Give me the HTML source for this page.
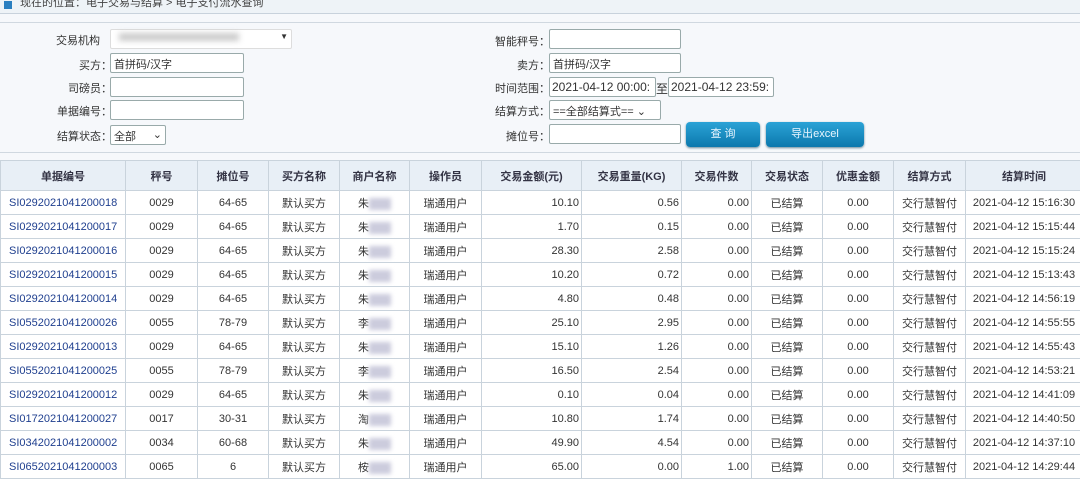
<!DOCTYPE html><html><head><meta charset="utf-8"><style>
body{margin:0;width:1080px;height:479px;overflow:hidden;background:#f6f8fb;font-family:"Liberation Sans","Noto Sans CJK SC",sans-serif;font-size:11px;color:#333;position:relative}
.a{position:absolute}
.lbl{position:absolute;text-align:right;font-size:11px;color:#333}
.in{position:absolute;height:19px;border:1px solid #9aa;background:#fff;box-sizing:border-box;font-size:11px;padding:2px 3px;color:#333;border-radius:2px}
.btn{position:absolute;height:25px;border-radius:4px;background:linear-gradient(#2ba3d6,#0b78ad);color:#eaf6ff;font-size:11px;text-align:center;line-height:25px;box-shadow:0 1px 2px #689}
table{position:absolute;left:0;top:160px;border-collapse:collapse;table-layout:fixed;width:1082px}
td,th{border:1px solid #c9d3dc;height:24px;padding:0 2px;font-size:11px;white-space:nowrap;overflow:hidden;text-align:center;box-sizing:border-box}
th{background:#e8eff6;height:30px;font-weight:bold;color:#334}
td{background:#fff}
td.r{text-align:right}
td.b{color:#1f3f8f;text-align:left;padding-left:8px}
.bl{display:inline-block;width:22px;height:12px;background:#ccd;filter:blur(2px);vertical-align:middle}
</style></head><body>
<div class="a" style="left:0;top:0;width:1080px;height:13px;background:#eef3f7;border-bottom:1px solid #c8d2dc;overflow:hidden">
<div class="a" style="left:4px;top:1px;width:8px;height:8px;background:#2a7fc0"></div>
<div class="a" style="left:20px;top:-6px;font-size:11px;color:#444">现在的位置：电子交易与结算 &gt; 电子支付流水查询</div>
</div>
<div class="a" style="left:0;top:22px;width:1080px;border-top:1px solid #d0d8e0"></div>
<div class="lbl" style="left:20px;width:80px;top:32px">交易机构</div>
<div class="in" style="left:110px;top:29px;width:182px;height:20px;border-color:#ddd"><span style="display:inline-block;width:120px;height:8px;background:#ccc;filter:blur(3px);margin-left:5px"></span><span style="float:right;font-size:8px">▼</span></div>
<div class="lbl" style="left:20px;width:92px;top:57px">买方：</div>
<div class="in" style="left:110px;top:53px;width:134px;height:20px">首拼码/汉字</div>
<div class="lbl" style="left:20px;width:92px;top:80px">司磅员：</div>
<div class="in" style="left:110px;top:77px;width:134px;height:20px"></div>
<div class="lbl" style="left:20px;width:92px;top:103px">单据编号：</div>
<div class="in" style="left:110px;top:100px;width:134px;height:20px"></div>
<div class="lbl" style="left:20px;width:92px;top:128px">结算状态：</div>
<div class="in" style="left:110px;top:125px;width:56px;height:20px">全部 <span style="float:right">⌄</span></div>
<div class="lbl" style="left:470px;width:80px;top:33px">智能秤号：</div>
<div class="in" style="left:549px;top:29px;width:132px;height:20px"></div>
<div class="lbl" style="left:470px;width:80px;top:57px">卖方：</div>
<div class="in" style="left:549px;top:53px;width:132px;height:20px">首拼码/汉字</div>
<div class="lbl" style="left:470px;width:80px;top:80px">时间范围：</div>
<div class="in" style="left:549px;top:77px;width:107px;height:20px;font-size:12px;padding:2px">2021-04-12 00:00:</div>
<div class="a" style="left:656px;top:80px;font-size:12px">至</div>
<div class="in" style="left:668px;top:77px;width:106px;height:20px;font-size:12px;padding:2px">2021-04-12 23:59:</div>
<div class="lbl" style="left:470px;width:80px;top:103px">结算方式：</div>
<div class="in" style="left:549px;top:100px;width:112px;height:20px;font-size:11px">==全部结算式== ⌄</div>
<div class="lbl" style="left:470px;width:80px;top:128px">摊位号：</div>
<div class="in" style="left:549px;top:124px;width:132px;height:20px"></div>
<div class="btn" style="left:686px;top:122px;width:74px">查 询</div>
<div class="btn" style="left:766px;top:122px;width:98px">导出excel</div>
<div class="a" style="left:0;top:152px;width:1080px;border-top:1px solid #d0d8e0"></div>
<table>
<colgroup><col style="width:125px"><col style="width:72px"><col style="width:71px"><col style="width:71px"><col style="width:70px"><col style="width:72px"><col style="width:100px"><col style="width:100px"><col style="width:70px"><col style="width:71px"><col style="width:71px"><col style="width:72px"><col style="width:117px"></colgroup>
<tr><th>单据编号</th><th>秤号</th><th>摊位号</th><th>买方名称</th><th>商户名称</th><th>操作员</th><th>交易金额(元)</th><th>交易重量(KG)</th><th>交易件数</th><th>交易状态</th><th>优惠金额</th><th>结算方式</th><th>结算时间</th></tr>
<tr><td class="b">SI0292021041200018</td><td>0029</td><td>64-65</td><td>默认买方</td><td>朱<span class="bl"></span></td><td>瑞通用户</td><td class="r">10.10</td><td class="r">0.56</td><td class="r">0.00</td><td>已结算</td><td>0.00</td><td>交行慧智付</td><td>2021-04-12 15:16:30</td></tr>
<tr><td class="b">SI0292021041200017</td><td>0029</td><td>64-65</td><td>默认买方</td><td>朱<span class="bl"></span></td><td>瑞通用户</td><td class="r">1.70</td><td class="r">0.15</td><td class="r">0.00</td><td>已结算</td><td>0.00</td><td>交行慧智付</td><td>2021-04-12 15:15:44</td></tr>
<tr><td class="b">SI0292021041200016</td><td>0029</td><td>64-65</td><td>默认买方</td><td>朱<span class="bl"></span></td><td>瑞通用户</td><td class="r">28.30</td><td class="r">2.58</td><td class="r">0.00</td><td>已结算</td><td>0.00</td><td>交行慧智付</td><td>2021-04-12 15:15:24</td></tr>
<tr><td class="b">SI0292021041200015</td><td>0029</td><td>64-65</td><td>默认买方</td><td>朱<span class="bl"></span></td><td>瑞通用户</td><td class="r">10.20</td><td class="r">0.72</td><td class="r">0.00</td><td>已结算</td><td>0.00</td><td>交行慧智付</td><td>2021-04-12 15:13:43</td></tr>
<tr><td class="b">SI0292021041200014</td><td>0029</td><td>64-65</td><td>默认买方</td><td>朱<span class="bl"></span></td><td>瑞通用户</td><td class="r">4.80</td><td class="r">0.48</td><td class="r">0.00</td><td>已结算</td><td>0.00</td><td>交行慧智付</td><td>2021-04-12 14:56:19</td></tr>
<tr><td class="b">SI0552021041200026</td><td>0055</td><td>78-79</td><td>默认买方</td><td>李<span class="bl"></span></td><td>瑞通用户</td><td class="r">25.10</td><td class="r">2.95</td><td class="r">0.00</td><td>已结算</td><td>0.00</td><td>交行慧智付</td><td>2021-04-12 14:55:55</td></tr>
<tr><td class="b">SI0292021041200013</td><td>0029</td><td>64-65</td><td>默认买方</td><td>朱<span class="bl"></span></td><td>瑞通用户</td><td class="r">15.10</td><td class="r">1.26</td><td class="r">0.00</td><td>已结算</td><td>0.00</td><td>交行慧智付</td><td>2021-04-12 14:55:43</td></tr>
<tr><td class="b">SI0552021041200025</td><td>0055</td><td>78-79</td><td>默认买方</td><td>李<span class="bl"></span></td><td>瑞通用户</td><td class="r">16.50</td><td class="r">2.54</td><td class="r">0.00</td><td>已结算</td><td>0.00</td><td>交行慧智付</td><td>2021-04-12 14:53:21</td></tr>
<tr><td class="b">SI0292021041200012</td><td>0029</td><td>64-65</td><td>默认买方</td><td>朱<span class="bl"></span></td><td>瑞通用户</td><td class="r">0.10</td><td class="r">0.04</td><td class="r">0.00</td><td>已结算</td><td>0.00</td><td>交行慧智付</td><td>2021-04-12 14:41:09</td></tr>
<tr><td class="b">SI0172021041200027</td><td>0017</td><td>30-31</td><td>默认买方</td><td>淘<span class="bl"></span></td><td>瑞通用户</td><td class="r">10.80</td><td class="r">1.74</td><td class="r">0.00</td><td>已结算</td><td>0.00</td><td>交行慧智付</td><td>2021-04-12 14:40:50</td></tr>
<tr><td class="b">SI0342021041200002</td><td>0034</td><td>60-68</td><td>默认买方</td><td>朱<span class="bl"></span></td><td>瑞通用户</td><td class="r">49.90</td><td class="r">4.54</td><td class="r">0.00</td><td>已结算</td><td>0.00</td><td>交行慧智付</td><td>2021-04-12 14:37:10</td></tr>
<tr><td class="b">SI0652021041200003</td><td>0065</td><td>6</td><td>默认买方</td><td>桉<span class="bl"></span></td><td>瑞通用户</td><td class="r">65.00</td><td class="r">0.00</td><td class="r">1.00</td><td>已结算</td><td>0.00</td><td>交行慧智付</td><td>2021-04-12 14:29:44</td></tr>
</table>
</body></html>
